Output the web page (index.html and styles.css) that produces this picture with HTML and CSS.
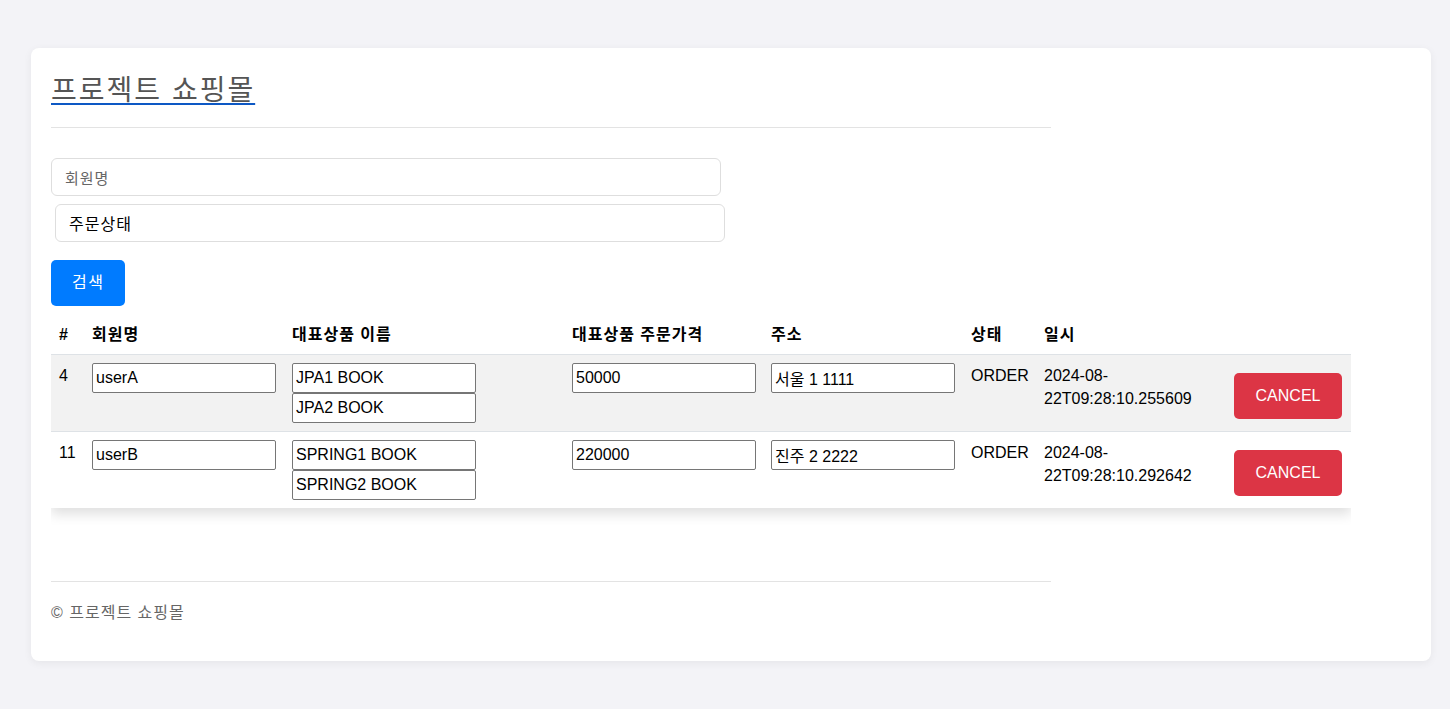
FILE: index.html
```html
<!DOCTYPE html>
<html lang="ko">
<head>
<meta charset="utf-8">
<title>프로젝트 쇼핑몰</title>
<link rel="stylesheet" href="styles.css">
</head>
<body>
<div class="card">
  <h1 class="title"><a class="title-link" href="#">프로젝트 쇼핑몰</a></h1>
  <hr class="rule">
  <form class="search">
    <input class="field" type="text" placeholder="회원명">
    <select class="field field-select">
      <option>주문상태</option>
    </select>
    <button class="btn btn-primary" type="button">검색</button>
  </form>
  <div class="table-wrap">
    <table class="orders">
      <colgroup>
        <col class="c-no"><col class="c-name"><col class="c-item"><col class="c-price">
        <col class="c-addr"><col class="c-status"><col class="c-date"><col class="c-act">
      </colgroup>
      <thead>
        <tr><th>#</th><th>회원명</th><th>대표상품 이름</th><th>대표상품 주문가격</th><th>주소</th><th>상태</th><th>일시</th><th></th></tr>
      </thead>
      <tbody>
        <tr class="odd">
          <td>4</td>
          <td><input class="cell-input" value="userA"></td>
          <td><input class="cell-input" value="JPA1 BOOK"><input class="cell-input" value="JPA2 BOOK"></td>
          <td><input class="cell-input" value="50000"></td>
          <td><input class="cell-input" value="서울 1 1111"></td>
          <td>ORDER</td>
          <td>2024-08-<br>22T09:28:10.255609</td>
          <td><button class="btn btn-danger" type="button">CANCEL</button></td>
        </tr>
        <tr>
          <td>11</td>
          <td><input class="cell-input" value="userB"></td>
          <td><input class="cell-input" value="SPRING1 BOOK"><input class="cell-input" value="SPRING2 BOOK"></td>
          <td><input class="cell-input" value="220000"></td>
          <td><input class="cell-input" value="진주 2 2222"></td>
          <td>ORDER</td>
          <td>2024-08-<br>22T09:28:10.292642</td>
          <td><button class="btn btn-danger" type="button">CANCEL</button></td>
        </tr>
      </tbody>
    </table>
  </div>
  <hr class="rule rule-footer">
  <footer class="footer">© 프로젝트 쇼핑몰</footer>
</div>
</body>
</html>
```
FILE: styles.css
```css
html, body {
  margin: 0;
  padding: 0;
}
body {
  background: #f3f3f7;
  font-family: "Liberation Sans", "Noto Sans CJK KR", sans-serif;
  color: #000;
}
.card {
  box-sizing: border-box;
  width: 1400px;
  margin: 48px 0 48px 31px;
  padding: 21px 20px 20px 20px;
  background: #fff;
  border-radius: 8px;
  box-shadow: 0 2px 8px rgba(0, 0, 0, 0.06);
}
.title {
  margin: 0;
  font-family: "Noto Sans CJK KR", sans-serif;
  font-size: 28px;
  font-weight: 400;
  line-height: 38px;
  letter-spacing: 2px;
}
.title-link {
  color: #555;
  text-decoration: underline;
  text-decoration-color: #0d58c4;
  text-decoration-thickness: 2px;
  text-underline-offset: 3px;
}
.rule {
  width: 1000px;
  margin: 20px 0 0 0;
  border: 0;
  border-top: 1px solid #e3e3e3;
  height: 0;
}
.search {
  display: flex;
  flex-direction: column;
  align-items: flex-start;
  margin-top: 30px;
}
.field {
  box-sizing: border-box;
  width: 670px;
  height: 38px;
  padding: 0 13px;
  border: 1px solid #dedede;
  border-radius: 6px;
  background: #fff;
  font-family: "Noto Sans CJK KR", sans-serif;
  font-size: 15px;
  letter-spacing: 1px;
  color: #000;
  outline: none;
}
.field::placeholder {
  color: #666;
}
.field-select {
  -webkit-appearance: none;
  appearance: none;
  margin: 8px 0 0 4px;
  font-size: 16px;
}
.btn {
  border: 0;
  border-radius: 5px;
  padding: 12px 21px;
  font-family: "Liberation Sans", "Noto Sans CJK KR", sans-serif;
  font-size: 16px;
  line-height: 22px;
  color: #fff;
  cursor: pointer;
}
.btn-primary {
  background: #007bff;
  margin-top: 18px;
  letter-spacing: 1.5px;
}
.btn-danger {
  background: #dc3545;
  margin-top: 9px;
  width: 108px;
  padding-left: 0;
  padding-right: 0;
}
.table-wrap {
  width: 1300px;
  margin-top: 10px;
  padding-bottom: 17px;
  overflow: hidden;
}
.orders {
  width: 1300px;
  border-collapse: collapse;
  table-layout: fixed;
  box-shadow: 0 6px 12px rgba(0, 0, 0, 0.13);
}
.c-no { width: 33px; }
.c-name { width: 200px; }
.c-item { width: 280px; }
.c-price { width: 199px; }
.c-addr { width: 200px; }
.c-status { width: 73px; }
.c-date { width: 190px; }
.c-act { width: 125px; }
.orders th {
  text-align: left;
  padding: 8px;
  font-size: 16px;
  font-weight: 700;
  line-height: 22px;
  letter-spacing: 1px;
  background: #fff;
}
.orders td {
  padding: 9px 8px 8px 8px;
  vertical-align: top;
  font-size: 16px;
  line-height: 23px;
  border-top: 1px solid #dee2e6;
  background: #fff;
}
.orders tr.odd td {
  background: #f2f2f2;
}
.cell-input {
  display: block;
  box-sizing: border-box;
  width: 184px;
  height: 30px;
  margin: -1px 0 0 0;
  padding: 0 3px;
  border: 1px solid #767676;
  border-radius: 2px;
  background: #fff;
  font-family: "Liberation Sans", "Noto Sans CJK KR", sans-serif;
  font-size: 16px;
  color: #000;
}
.cell-input + .cell-input {
  margin-top: 0;
}
.rule-footer {
  margin-top: 56px;
}
.footer {
  margin: 20px 0 17px 0;
  font-family: "Liberation Sans", "Noto Sans CJK KR", sans-serif;
  font-size: 16px;
  line-height: 22px;
  letter-spacing: 1px;
  color: #666;
}
```
